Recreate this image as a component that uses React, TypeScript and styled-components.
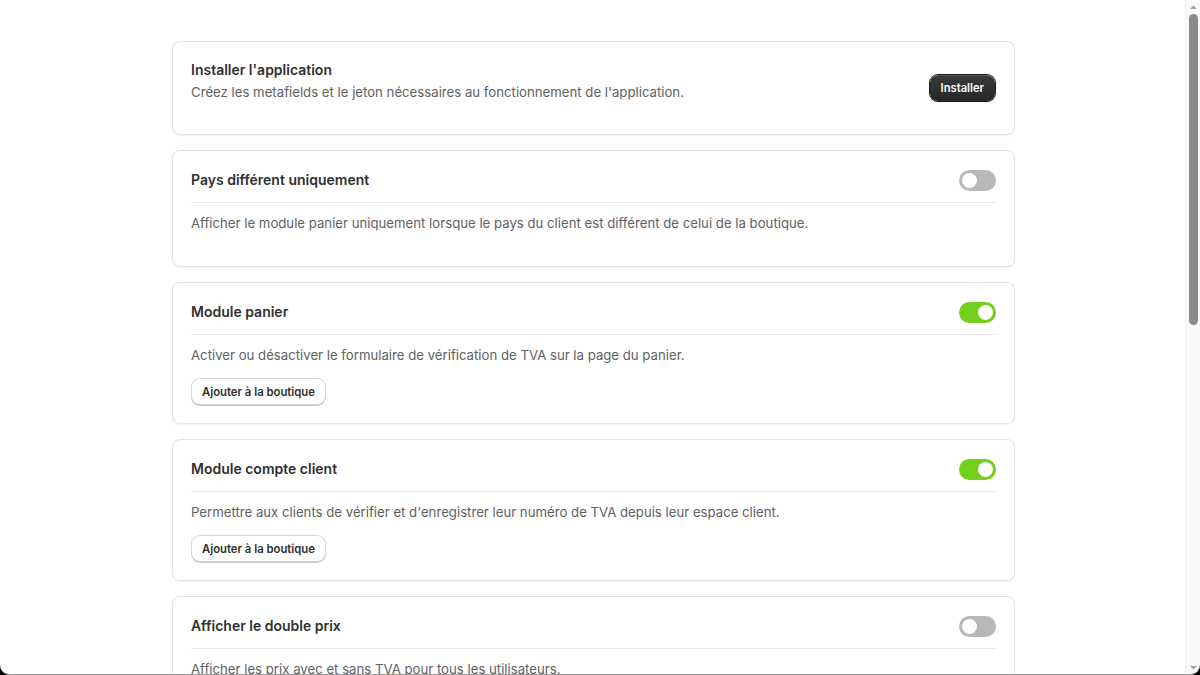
import * as React from 'react'
import styled, { createGlobalStyle } from 'styled-components'

const GlobalStyle = createGlobalStyle`
  html, body { margin: 0; padding: 0; background: #ffffff; }
  body {
    font-family: Inter, "Noto Sans", "Liberation Sans", sans-serif;
    color: #303030;
    -webkit-font-smoothing: antialiased;
  }
  * { box-sizing: border-box; }
`

interface Setting {
  title: string
  description: string
  enabled: boolean
  action?: string
}

const settings: Setting[] = [
  {
    title: 'Pays différent uniquement',
    description: 'Afficher le module panier uniquement lorsque le pays du client est différent de celui de la boutique.',
    enabled: false,
  },
  {
    title: 'Module panier',
    description: 'Activer ou désactiver le formulaire de vérification de TVA sur la page du panier.',
    enabled: true,
    action: 'Ajouter à la boutique',
  },
  {
    title: 'Module compte client',
    description: "Permettre aux clients de vérifier et d'enregistrer leur numéro de TVA depuis leur espace client.",
    enabled: true,
    action: 'Ajouter à la boutique',
  },
  {
    title: 'Afficher le double prix',
    description: 'Afficher les prix avec et sans TVA pour tous les utilisateurs.',
    enabled: false,
  },
]

const Toggle = ({ on, onChange }: { on: boolean, onChange: () => void }) => (
  <Switch type="button" role="switch" aria-checked={on} on={on} onClick={onChange}>
    <Knob on={on} />
  </Switch>
)

const SettingCard = ({ setting }: { setting: Setting }) => {
  const [on, setOn] = React.useState(setting.enabled)
  return (
    <Card>
      <CardHeader>
        <Title>{setting.title}</Title>
        <Toggle on={on} onChange={() => setOn(!on)} />
      </CardHeader>
      <Divider />
      <Description>{setting.description}</Description>
      {setting.action ? <SecondaryButton type="button">{setting.action}</SecondaryButton> : null}
    </Card>
  )
}

// drawn window scrollbar, as seen in the capture
const Scrollbar = () => (
  <ScrollTrack>
    <Arrow viewBox="0 0 15 15" style={{ top: 0 }}><path d="M4 9h7L7.5 5.5z" fill="#a3a3a3" /></Arrow>
    <Thumb />
    <Arrow viewBox="0 0 15 15" style={{ bottom: 0 }}><path d="M4 6h7L7.5 9.5z" fill="#a3a3a3" /></Arrow>
  </ScrollTrack>
)

const App = () => (
  <>
    <GlobalStyle />
    <Page>
      <Layout>
        <Card>
          <InstallRow>
            <InstallText>
              <Title>Installer l'application</Title>
              <InstallDescription>Créez les metafields et le jeton nécessaires au fonctionnement de l'application.</InstallDescription>
            </InstallText>
            <PrimaryButton type="button">Installer</PrimaryButton>
          </InstallRow>
        </Card>
        {settings.map(s => <SettingCard key={s.title} setting={s} />)}
      </Layout>
    </Page>
    <Scrollbar />
    <ScreenFrame />
  </>
)

export default App

const Page = styled.div`
  min-height: 1400px;
  padding: 41px 15px 60px 2px;
`

const Layout = styled.main`
  max-width: 843px;
  margin: 0 auto;
  display: flex;
  flex-direction: column;
  gap: 15px;
`

const Card = styled.section`
  background: #ffffff;
  border: 1px solid #e3e3e3;
  border-radius: 8px;
  box-shadow: 0 1px 2px rgba(0, 0, 0, 0.06);
  padding: 18px 18px 19px;
  display: flex;
  flex-direction: column;
  align-items: flex-start;
`

const InstallRow = styled.div`
  width: 100%;
  display: flex;
  align-items: center;
  justify-content: space-between;
`

const InstallText = styled.div`
  display: flex;
  flex-direction: column;
  gap: 2px;
`

const CardHeader = styled.div`
  width: 100%;
  height: 22px;
  display: flex;
  align-items: center;
  justify-content: space-between;
`

const Title = styled.h2`
  margin: 0;
  font-size: 14px;
  line-height: 20px;
  font-weight: 600;
  color: #303030;
`

const Divider = styled.hr`
  width: 100%;
  margin: 11px 0 10px;
  border: 0;
  border-top: 1px solid #ebebeb;
`

const Description = styled.p`
  margin: 0 0 14px;
  font-size: 13.2px;
  line-height: 20px;
  color: #616161;
`

const InstallDescription = styled(Description)`
  margin-bottom: 13px;
`

const Switch = styled.button<{ on: boolean }>`
  position: relative;
  width: 37px;
  height: 21px;
  padding: 0;
  border: 0;
  border-radius: 11px;
  cursor: pointer;
  background: ${p => p.on ? '#74cf1b' : '#b8b8b8'};
`

const Knob = styled.span<{ on: boolean }>`
  position: absolute;
  top: 3px;
  left: ${p => p.on ? '19px' : '3px'};
  width: 15px;
  height: 15px;
  border-radius: 50%;
  background: #ffffff;
`

const PrimaryButton = styled.button`
  height: 26px;
  padding: 0 11px;
  border: 0;
  border-radius: 8px;
  background: linear-gradient(#3a3a3a, #262626);
  box-shadow: 0 0 0 1px #1a1a1a, inset 0 1px 0 rgba(255, 255, 255, 0.18), 0 1px 1px rgba(0, 0, 0, 0.25);
  color: #ffffff;
  font-family: inherit;
  font-size: 11.2px;
  font-weight: 600;
  cursor: pointer;
  margin-right: 1px;
`

const SecondaryButton = styled.button`
  height: 25px;
  padding: 0 10px;
  margin-left: 1px;
  border: 0;
  border-radius: 8px;
  background: #ffffff;
  box-shadow: 0 0 0 1px #d4d4d4, 0 1px 0 1px #c9c9c9;
  color: #303030;
  font-family: inherit;
  font-size: 11.3px;
  font-weight: 600;
  cursor: pointer;
`

const ScrollTrack = styled.div`
  position: fixed;
  top: 0;
  right: 0;
  bottom: 0;
  width: 15px;
  background: #fafafa;
  border-left: 1px solid #f0f0f0;
  pointer-events: none;
`

const Arrow = styled.svg`
  position: absolute;
  left: 0;
  width: 15px;
  height: 15px;
`

const Thumb = styled.div`
  position: absolute;
  top: 14px;
  left: 3px;
  width: 9px;
  height: 311px;
  border-radius: 5px;
  background: #8a8a8a;
`

const ScreenFrame = styled.div`
  position: fixed;
  inset: 0;
  pointer-events: none;
  border-bottom: 1px solid #9a9a9a;
  border-radius: 0 0 10px 10px;
  box-shadow: 0 0 0 30px #000000;
`
